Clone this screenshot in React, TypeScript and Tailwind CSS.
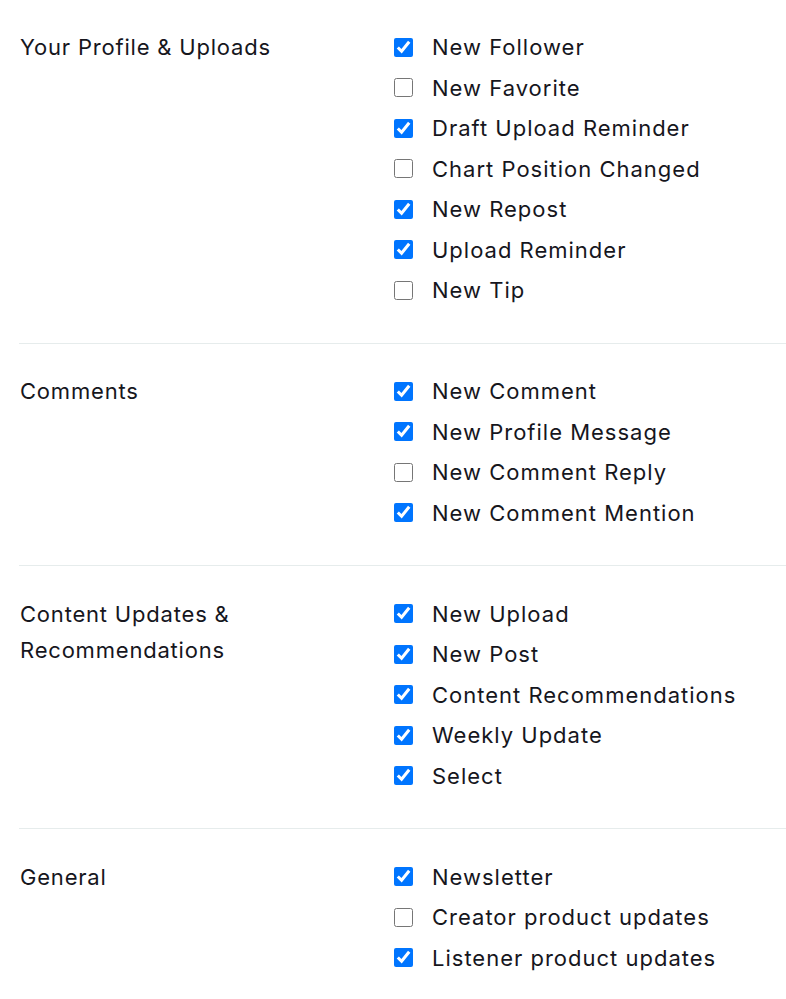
import React from "react";

type Item = { label: string; checked: boolean };
type Section = { title: string; items: Item[] };

const sections: Section[] = [
  {
    title: "Your Profile & Uploads",
    items: [
      { label: "New Follower", checked: true },
      { label: "New Favorite", checked: false },
      { label: "Draft Upload Reminder", checked: true },
      { label: "Chart Position Changed", checked: false },
      { label: "New Repost", checked: true },
      { label: "Upload Reminder", checked: true },
      { label: "New Tip", checked: false },
    ],
  },
  {
    title: "Comments",
    items: [
      { label: "New Comment", checked: true },
      { label: "New Profile Message", checked: true },
      { label: "New Comment Reply", checked: false },
      { label: "New Comment Mention", checked: true },
    ],
  },
  {
    title: "Content Updates & Recommendations",
    items: [
      { label: "New Upload", checked: true },
      { label: "New Post", checked: true },
      { label: "Content Recommendations", checked: true },
      { label: "Weekly Update", checked: true },
      { label: "Select", checked: true },
    ],
  },
  {
    title: "General",
    items: [
      { label: "Newsletter", checked: true },
      { label: "Creator product updates", checked: false },
      { label: "Listener product updates", checked: true },
    ],
  },
];

const App = () => {
  return (
    <div
      className="min-h-screen bg-white pl-[19px] text-[#16161d] tracking-[1px]"
      style={{ fontFamily: "Inter, 'Open Sans', sans-serif" }}
    >
      {sections.map((s, i) => (
        <div
          key={s.title}
          className={
            "flex pb-[32px] " +
            (i === 0 ? "pt-[27px] " : "pt-[27.5px] ") +
            (i < sections.length - 1 ? "border-b border-[#e6ecec]" : "")
          }
        >
          <div className="w-[375px] pl-px pr-4 pt-[2px] text-[22px] leading-[36px]">
            <span className="block max-w-[280px] tracking-[0.8px]">{s.title}</span>
          </div>
          <ul className="flex flex-col">
            {s.items.map((it) => (
              <li key={it.label} className="flex h-[40.5px] items-center">
                <label className="flex items-center">
                  <input
                    type="checkbox"
                    defaultChecked={it.checked}
                    className="m-0 h-[19px] w-[19px] accent-[#0075ff]"
                  />
                  <span className="ml-[19px] text-[22px] leading-[30px]">
                    {it.label}
                  </span>
                </label>
              </li>
            ))}
          </ul>
        </div>
      ))}
    </div>
  );
};

export default App;
